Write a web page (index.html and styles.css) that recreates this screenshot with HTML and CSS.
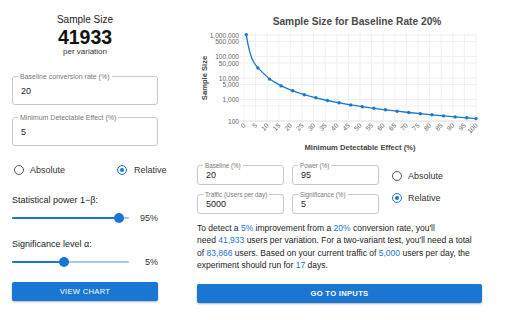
FILE: index.html
```html
<!DOCTYPE html>
<html>
<head>
<meta charset="utf-8">
<link rel="stylesheet" href="styles.css">
</head>
<body>
<div class="page">
  <div class="left">
    <div class="summary">
      <div class="sum-title">Sample Size</div>
      <div class="sum-value">41933</div>
      <div class="sum-sub">per variation</div>
    </div>
    <div class="field big first">
      <span class="flabel">Baseline conversion rate (%)</span>
      <span class="fvalue">20</span>
    </div>
    <div class="field big second">
      <span class="flabel">Minimum Detectable Effect (%)</span>
      <span class="fvalue">5</span>
    </div>
    <div class="radios-row">
      <label class="radio"><span class="circle"></span>Absolute</label>
      <label class="radio rel"><span class="circle on"></span>Relative</label>
    </div>
    <div class="slabel first-s">Statistical power 1−β:</div>
    <div class="slider-row">
      <div class="slider"><div class="rail"></div><div class="track" style="width:107px"></div><div class="thumb" style="left:107px"></div></div>
      <span class="sval">95%</span>
    </div>
    <div class="slabel">Significance level α:</div>
    <div class="slider-row">
      <div class="slider"><div class="rail"></div><div class="track" style="width:52px"></div><div class="thumb" style="left:52px"></div></div>
      <span class="sval">5%</span>
    </div>
    <button class="btn left-btn">VIEW CHART</button>
  </div>

  <div class="right">
    <svg class="chart" width="300" height="158" viewBox="0 0 300 158" xmlns="http://www.w3.org/2000/svg">
      <text x="167" y="24.5" class="ctitle" text-anchor="middle">Sample Size for Baseline Rate 20%</text>
      <g class="grid" stroke="#ececec" stroke-width="0.8">
        <line x1="54" y1="33" x2="54" y2="121"/>
        <line x1="65.6" y1="33" x2="65.6" y2="121"/>
        <line x1="77.2" y1="33" x2="77.2" y2="121"/>
        <line x1="88.8" y1="33" x2="88.8" y2="121"/>
        <line x1="100.4" y1="33" x2="100.4" y2="121"/>
        <line x1="112" y1="33" x2="112" y2="121"/>
        <line x1="123.6" y1="33" x2="123.6" y2="121"/>
        <line x1="135.2" y1="33" x2="135.2" y2="121"/>
        <line x1="146.8" y1="33" x2="146.8" y2="121"/>
        <line x1="158.4" y1="33" x2="158.4" y2="121"/>
        <line x1="170" y1="33" x2="170" y2="121"/>
        <line x1="181.6" y1="33" x2="181.6" y2="121"/>
        <line x1="193.2" y1="33" x2="193.2" y2="121"/>
        <line x1="204.8" y1="33" x2="204.8" y2="121"/>
        <line x1="216.4" y1="33" x2="216.4" y2="121"/>
        <line x1="228" y1="33" x2="228" y2="121"/>
        <line x1="239.6" y1="33" x2="239.6" y2="121"/>
        <line x1="251.2" y1="33" x2="251.2" y2="121"/>
        <line x1="262.8" y1="33" x2="262.8" y2="121"/>
        <line x1="274.4" y1="33" x2="274.4" y2="121"/>
        <line x1="286" y1="33" x2="286" y2="121"/>
        <line x1="50" y1="35" x2="286" y2="35"/>
        <line x1="50" y1="41.5" x2="286" y2="41.5"/>
        <line x1="50" y1="56.5" x2="286" y2="56.5"/>
        <line x1="50" y1="63" x2="286" y2="63"/>
        <line x1="50" y1="78" x2="286" y2="78"/>
        <line x1="50" y1="84.5" x2="286" y2="84.5"/>
        <line x1="50" y1="99.5" x2="286" y2="99.5"/>
        <line x1="50" y1="106" x2="286" y2="106"/>
      </g>
      <line x1="50" y1="121" x2="286" y2="121" stroke="#d6d6d6" stroke-width="0.8"/>
      <g class="ylab" text-anchor="end">
        <text x="49" y="37.5">1,000,000</text>
        <text x="49" y="44">500,000</text>
        <text x="49" y="59">100,000</text>
        <text x="49" y="65.5">50,000</text>
        <text x="49" y="80.5">10,000</text>
        <text x="49" y="87">5,000</text>
        <text x="49" y="102">1,000</text>
        <text x="49" y="123.5">100</text>
      </g>
      <g class="xlab" text-anchor="end">
        <text transform="translate(56,126) rotate(-45)">0</text>
        <text transform="translate(67.6,126) rotate(-45)">5</text>
        <text transform="translate(79.2,126) rotate(-45)">10</text>
        <text transform="translate(90.8,126) rotate(-45)">15</text>
        <text transform="translate(102.4,126) rotate(-45)">20</text>
        <text transform="translate(114,126) rotate(-45)">25</text>
        <text transform="translate(125.6,126) rotate(-45)">30</text>
        <text transform="translate(137.2,126) rotate(-45)">35</text>
        <text transform="translate(148.8,126) rotate(-45)">40</text>
        <text transform="translate(160.4,126) rotate(-45)">45</text>
        <text transform="translate(172,126) rotate(-45)">50</text>
        <text transform="translate(183.6,126) rotate(-45)">55</text>
        <text transform="translate(195.2,126) rotate(-45)">60</text>
        <text transform="translate(206.8,126) rotate(-45)">65</text>
        <text transform="translate(218.4,126) rotate(-45)">70</text>
        <text transform="translate(230,126) rotate(-45)">75</text>
        <text transform="translate(241.6,126) rotate(-45)">80</text>
        <text transform="translate(253.2,126) rotate(-45)">85</text>
        <text transform="translate(264.8,126) rotate(-45)">90</text>
        <text transform="translate(276.4,126) rotate(-45)">95</text>
        <text transform="translate(288,126) rotate(-45)">100</text>
      </g>
      <text class="atitle" transform="translate(17,78) rotate(-90)" text-anchor="middle">Sample Size</text>
      <text class="atitle" x="170" y="150" text-anchor="middle">Minimum Detectable Effect (%)</text>
      <path d="M56.3,34.6 C58,46 61,58 64,62.5 C65.5,65 66.8,66.6 67.9,67.9 L79.5,79.1 L91.1,85.9 L102.7,90.8 L114.3,94.7 L125.9,97.8 L137.5,100.5 L149.1,102.8 L160.7,104.9 L172.3,106.7 L183.9,108.3 L195.5,109.8 L207.1,111.2 L218.7,112.5 L230.3,113.7 L241.9,114.8 L253.5,115.9 L265.1,116.9 L276.7,117.8 L286,118.6" fill="none" stroke="#1976d2" stroke-width="1.3"/>
      <g fill="#1976d2">
        <circle cx="56.3" cy="34.6" r="1.7"/>
        <circle cx="67.9" cy="67.9" r="1.7"/>
        <circle cx="79.5" cy="79.1" r="1.7"/>
        <circle cx="91.1" cy="85.9" r="1.7"/>
        <circle cx="102.7" cy="90.8" r="1.7"/>
        <circle cx="114.3" cy="94.7" r="1.7"/>
        <circle cx="125.9" cy="97.8" r="1.7"/>
        <circle cx="137.5" cy="100.5" r="1.7"/>
        <circle cx="149.1" cy="102.8" r="1.7"/>
        <circle cx="160.7" cy="104.9" r="1.7"/>
        <circle cx="172.3" cy="106.7" r="1.7"/>
        <circle cx="183.9" cy="108.3" r="1.7"/>
        <circle cx="195.5" cy="109.8" r="1.7"/>
        <circle cx="207.1" cy="111.2" r="1.7"/>
        <circle cx="218.7" cy="112.5" r="1.7"/>
        <circle cx="230.3" cy="113.7" r="1.7"/>
        <circle cx="241.9" cy="114.8" r="1.7"/>
        <circle cx="253.5" cy="115.9" r="1.7"/>
        <circle cx="265.1" cy="116.9" r="1.7"/>
        <circle cx="276.7" cy="117.8" r="1.7"/>
        <circle cx="286" cy="118.6" r="1.7"/>
      </g>
    </svg>

    <div class="controls">
      <div class="fgrid">
        <div class="field small"><span class="flabel">Baseline (%)</span><span class="fvalue">20</span></div>
        <div class="field small"><span class="flabel">Power (%)</span><span class="fvalue">95</span></div>
        <div class="field small"><span class="flabel">Traffic (Users per day)</span><span class="fvalue">5000</span></div>
        <div class="field small"><span class="flabel">Significance (%)</span><span class="fvalue">5</span></div>
      </div>
      <div class="rcol">
        <label class="radio"><span class="circle"></span>Absolute</label>
        <label class="radio"><span class="circle on"></span>Relative</label>
      </div>
    </div>

    <p class="summary-text">To detect a <b>5%</b> improvement from a <b>20%</b> conversion rate, you'll<br>need <b>41,933</b> users per variation. For a two-variant test, you'll need a total of <b>83,866</b> users. Based on your current traffic of <b>5,000</b> users per day, the experiment should run for <b>17</b> days.</p>

    <button class="btn right-btn">GO TO INPUTS</button>
  </div>
</div>
</body>
</html>
```

FILE: styles.css
```css
* { box-sizing: border-box; }
html, body {
  margin: 0;
  padding: 0;
  background: #fff;
  font-family: "Liberation Sans", Arial, sans-serif;
  color: #222;
}
.page {
  display: flex;
  width: 512px;
  height: 320px;
  overflow: hidden;
}
.left {
  width: 146px;
  margin-left: 12px;
  display: flex;
  flex-direction: column;
}
.summary {
  text-align: center;
  padding-top: 14px;
}
.sum-title { font-size: 10px; line-height: 12px; color: #222; }
.sum-value { font-size: 19.5px; line-height: 20px; font-weight: bold; margin-top: 1px; color: #111; }
.sum-sub { font-size: 8px; line-height: 10px; margin-top: 0; color: #333; }

.field {
  position: relative;
  border: 1px solid #c8c8c8;
  border-radius: 3px;
  display: flex;
  align-items: center;
}
.field.big { height: 29px; padding-left: 8px; }
.field.big.first { margin-top: 19px; }
.field.big.second { margin-top: 12px; }
.flabel {
  position: absolute;
  top: -4px;
  left: 5px;
  padding: 0 2px;
  background: #fff;
  font-size: 6.3px;
  line-height: 7px;
  color: #777;
  white-space: nowrap;
}
.field.big .flabel { font-size: 7px; top: -4.5px; line-height: 8px; }
.fvalue { font-size: 9px; color: #222; }

.radios-row {
  display: flex;
  margin-top: 19px;
  height: 10px;
  align-items: center;
}
.radio {
  display: flex;
  align-items: center;
  font-size: 9px;
  color: #333;
  white-space: nowrap;
}
.radios-row .radio:first-child { margin-left: 2px; }
.radios-row .radio.rel { margin-left: 52px; }
.circle {
  width: 10px;
  height: 10px;
  border-radius: 50%;
  border: 1.3px solid #555;
  margin-right: 6px;
  position: relative;
  flex: none;
}
.circle.on { border-color: #1976d2; }
.circle.on::after {
  content: "";
  position: absolute;
  left: 1.6px;
  top: 1.6px;
  width: 4.2px;
  height: 4.2px;
  border-radius: 50%;
  background: #1976d2;
}
.radios-row .radio.rel .circle { margin-right: 7px; }

.slabel {
  font-size: 9px;
  line-height: 11px;
  color: #222;
  margin-top: 15px;
}
.slabel.first-s { margin-top: 20px; }
.slider-row {
  display: flex;
  align-items: center;
  justify-content: space-between;
  height: 12px;
  margin-top: 6px;
}
.slider {
  position: relative;
  width: 117px;
  height: 12px;
}
.rail {
  position: absolute;
  left: 0;
  right: 0;
  top: 5px;
  height: 2px;
  background: #a9c8ee;
  border-radius: 1px;
}
.track {
  position: absolute;
  left: 0;
  top: 5px;
  height: 2.4px;
  background: #1976d2;
  border-radius: 1px;
}
.thumb {
  position: absolute;
  top: 1px;
  width: 10px;
  height: 10px;
  margin-left: -5px;
  border-radius: 50%;
  background: #1976d2;
}
.sval { font-size: 9px; color: #333; }

.btn {
  display: block;
  border: none;
  border-radius: 2px;
  background: #1976d2;
  color: #fff;
  font-family: "Liberation Sans", Arial, sans-serif;
  font-size: 7.6px;
  letter-spacing: 0.3px;
  height: 19px;
  box-shadow: 0 1px 2px rgba(0,0,0,0.3);
  padding: 0;
}
.left-btn { margin-top: 14px; width: 146px; font-weight: normal; }

.right {
  margin-left: 39px;
  width: 285px;
  display: flex;
  flex-direction: column;
}
.chart {
  display: block;
  margin-left: -7px;
}
.ctitle { font-size: 10.2px; font-weight: bold; fill: #4a4a4a; }
.ylab text, .xlab text { font-size: 6.6px; fill: #666; }
.atitle { font-size: 7.6px; font-weight: bold; fill: #444; }

.controls {
  display: flex;
  margin-top: 7px;
}
.fgrid {
  display: grid;
  grid-template-columns: 87px 87px;
  column-gap: 8px;
  row-gap: 9px;
}
.field.small { height: 20px; padding-left: 8px; }
.rcol {
  display: flex;
  flex-direction: column;
  gap: 12px;
  margin-left: 13px;
  padding-top: 6px;
}
.rcol .radio { height: 10px; }

.summary-text {
  margin: 8px 0 0 0;
  width: 280px;
  font-size: 8.5px;
  line-height: 12.4px;
  color: #222;
}
.summary-text b { font-weight: normal; color: #1976d2; }
.right-btn { margin-top: 12px; width: 285px; font-weight: bold; }
```
